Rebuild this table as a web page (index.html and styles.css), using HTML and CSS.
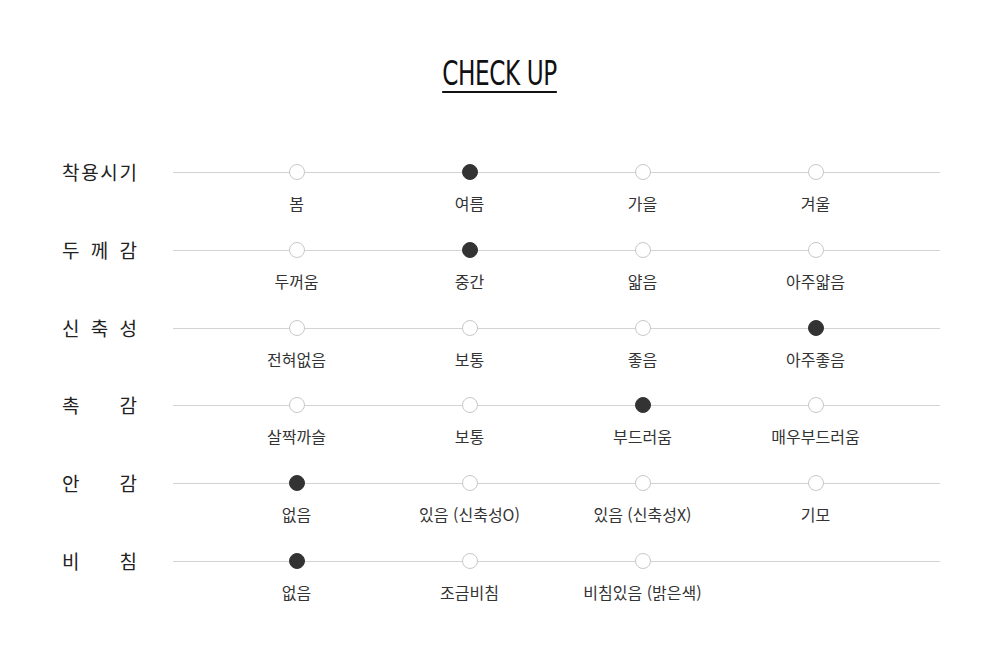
FILE: index.html
```html
<!DOCTYPE html>
<html lang="ko">
<head>
<meta charset="utf-8">
<title>CHECK UP</title>
<link rel="stylesheet" href="styles.css">
</head>
<body>
<div class="page">
  <div class="title-wrap"><h2 class="title">CHECK UP</h2></div>
  <div class="table">
    <div class="row">
      <div class="label tight">착용시기</div>
      <div class="track">
        <div class="opt"><span class="dot"></span><span class="txt">봄</span></div>
        <div class="opt"><span class="dot on"></span><span class="txt">여름</span></div>
        <div class="opt"><span class="dot"></span><span class="txt">가을</span></div>
        <div class="opt"><span class="dot"></span><span class="txt">겨울</span></div>
      </div>
    </div>
    <div class="row">
      <div class="label">두 께 감</div>
      <div class="track">
        <div class="opt"><span class="dot"></span><span class="txt">두꺼움</span></div>
        <div class="opt"><span class="dot on"></span><span class="txt">중간</span></div>
        <div class="opt"><span class="dot"></span><span class="txt">얇음</span></div>
        <div class="opt"><span class="dot"></span><span class="txt">아주얇음</span></div>
      </div>
    </div>
    <div class="row">
      <div class="label">신 축 성</div>
      <div class="track">
        <div class="opt"><span class="dot"></span><span class="txt">전혀없음</span></div>
        <div class="opt"><span class="dot"></span><span class="txt">보통</span></div>
        <div class="opt"><span class="dot"></span><span class="txt">좋음</span></div>
        <div class="opt"><span class="dot on"></span><span class="txt">아주좋음</span></div>
      </div>
    </div>
    <div class="row">
      <div class="label">촉 감</div>
      <div class="track">
        <div class="opt"><span class="dot"></span><span class="txt">살짝까슬</span></div>
        <div class="opt"><span class="dot"></span><span class="txt">보통</span></div>
        <div class="opt"><span class="dot on"></span><span class="txt">부드러움</span></div>
        <div class="opt"><span class="dot"></span><span class="txt">매우부드러움</span></div>
      </div>
    </div>
    <div class="row">
      <div class="label">안 감</div>
      <div class="track">
        <div class="opt"><span class="dot on"></span><span class="txt">없음</span></div>
        <div class="opt"><span class="dot"></span><span class="txt">있음 (신축성O)</span></div>
        <div class="opt"><span class="dot"></span><span class="txt">있음 (신축성X)</span></div>
        <div class="opt"><span class="dot"></span><span class="txt">기모</span></div>
      </div>
    </div>
    <div class="row">
      <div class="label">비 침</div>
      <div class="track">
        <div class="opt"><span class="dot on"></span><span class="txt">없음</span></div>
        <div class="opt"><span class="dot"></span><span class="txt">조금비침</span></div>
        <div class="opt"><span class="dot"></span><span class="txt">비침있음 (밝은색)</span></div>
      </div>
    </div>
  </div>
</div>
</body>
</html>
```

FILE: styles.css
```css
html, body {
  margin: 0;
  padding: 0;
  background: #fff;
}

.page {
  width: 1000px;
  height: 661px;
  box-sizing: border-box;
  padding-top: 57px;
  font-family: "Noto Sans CJK KR", "Noto Sans", sans-serif;
  color: #222;
}

.title-wrap {
  display: flex;
  justify-content: center;
}

.title {
  margin: 0;
  font-family: "Liberation Sans Narrow", "DejaVu Sans Condensed", "Liberation Sans", sans-serif;
  font-weight: 400;
  font-size: 33px;
  line-height: 33px;
  letter-spacing: -0.5px;
  color: #111;
  border-bottom: 2px solid #111;
  padding-bottom: 1px;
  transform: scaleX(0.78);
}

.table {
  margin-top: 71px;
  padding-left: 62px;
}

.row {
  display: flex;
  height: 77.8px;
}

.label {
  width: 75px;
  margin-right: 36px;
  height: 16px;
  line-height: 16px;
  font-size: 19px;
  color: #222;
  text-align: justify;
  text-align-last: justify;
  white-space: nowrap;
}

.label.tight {
  letter-spacing: 1.7px;
  text-align: left;
  text-align-last: left;
}

.track {
  position: relative;
  width: 767px;
  display: grid;
  grid-template-columns: repeat(4, 173px);
  padding-left: 37px;
  box-sizing: border-box;
  align-content: start;
}

.track::before {
  content: "";
  position: absolute;
  left: 0;
  right: 0;
  top: 8px;
  height: 1px;
  background: #d3d3d3;
}

.opt {
  position: relative;
  display: flex;
  flex-direction: column;
  align-items: center;
  gap: 12px;
}

.dot {
  width: 16px;
  height: 16px;
  box-sizing: border-box;
  border-radius: 50%;
  border: 1px solid #c8c8c8;
  background: #fff;
}

.dot.on {
  border-color: #333;
  background: #333;
}

.txt {
  font-size: 16px;
  line-height: 22px;
  color: #333;
  white-space: nowrap;
}
```
